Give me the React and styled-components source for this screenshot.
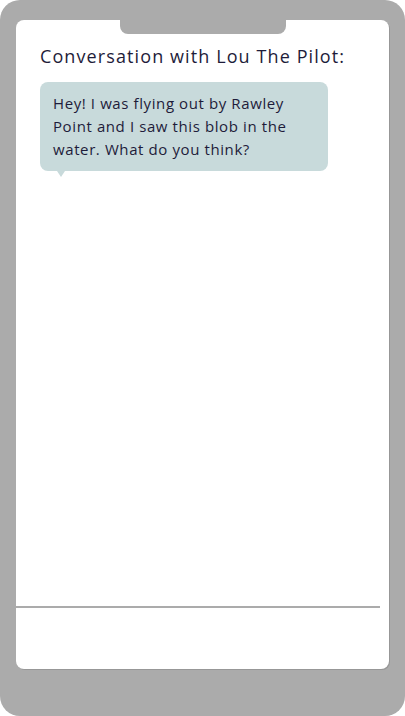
import styled, { createGlobalStyle } from 'styled-components';

const GlobalStyle = createGlobalStyle`
    html, body {
        margin: 0;
        padding: 0;
        background: #fff;
    }
    body {
        font-family: "Open Sans", sans-serif;
    }
`;

const Phone = styled.div`
    width: 405px;
    height: 716px;
    box-sizing: border-box;
    background: #ababab;
    border-radius: 20px;
    padding: 20px 16px 47px 16px;
    display: flex;
`;

const Screen = styled.div`
    flex: 1;
    background: #fff;
    border-radius: 8px;
    box-shadow: 1px 1px 0 #979797;
    display: flex;
    flex-direction: column;
    overflow: hidden;
`;

const Notch = styled.div`
    align-self: center;
    width: 166px;
    height: 14px;
    background: #ababab;
    border-radius: 0 0 8px 8px;
    flex-shrink: 0;
`;

const Conversation = styled.div`
    flex: 1;
    padding: 9px 24px 0 24px;
`;

const Title = styled.h1`
    margin: 0 0 13px 0;
    font-size: 18px;
    font-weight: 400;
    line-height: 26px;
    letter-spacing: 1.1px;
    color: #1e1c3a;
`;

const Bubble = styled.div`
    position: relative;
    width: 288px;
    box-sizing: border-box;
    background: #c8dadb;
    border-radius: 8px;
    padding: 10px 13px 10px 13px;
    font-size: 15px;
    line-height: 23px;
    letter-spacing: 0.6px;
    color: #1e1c3a;

    &::after {
        content: '';
        position: absolute;
        left: 17px;
        bottom: -6px;
        border-left: 4px solid transparent;
        border-right: 4px solid transparent;
        border-top: 6px solid #c8dadb;
    }
`;

const Divider = styled.hr`
    margin: 0;
    width: 364px;
    border: none;
    border-top: 2px solid #ababab;
`;

const InputArea = styled.div`
    height: 61px;
    flex-shrink: 0;
`;

export default function App() {
    return <>
        <GlobalStyle />
        <Phone>
            <Screen>
                <Notch />
                <Conversation>
                    <Title>Conversation with Lou The Pilot:</Title>
                    <Bubble>
                        Hey! I was flying out by Rawley Point and I saw this blob in the water. What do you think?
                    </Bubble>
                </Conversation>
                <Divider />
                <InputArea />
            </Screen>
        </Phone>
    </>
}
